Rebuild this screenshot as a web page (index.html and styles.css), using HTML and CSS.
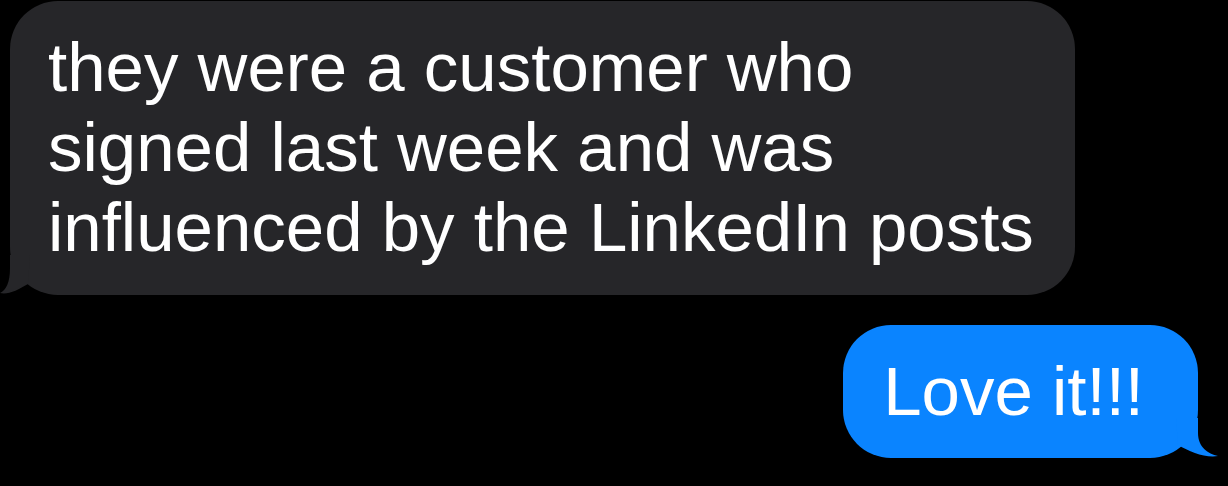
FILE: index.html
```html
<!DOCTYPE html>
<html>
<head>
<meta charset="utf-8">
<link rel="stylesheet" href="styles.css">
</head>
<body>
<div class="thread">
  <div class="bubble them">
    they were a customer who<br>signed last week and was<br>influenced by the LinkedIn posts
    <svg class="tail tail-them" width="50" height="40" viewBox="0 0 50 40"><path d="M10 0 L10 13 C10 28 6 35 0 38 C8 40 18 35 28 29 L30 0 Z"/></svg>
  </div>
  <div class="bubble me">
    Love it!!!
    <svg class="tail tail-me" width="50" height="40" viewBox="0 0 50 40"><path d="M30 0 L30 15 C30 29 40 36 50 38 C37 40 22 34 10 27 L8 0 Z"/></svg>
  </div>
</div>
</body>
</html>
```

FILE: styles.css
```css
html, body {
  margin: 0;
  padding: 0;
  background: #000;
}
body {
  width: 1228px;
  height: 486px;
  overflow: hidden;
}
.thread {
  display: flex;
  flex-direction: column;
  gap: 30px;
  padding-top: 1px;
}
.bubble {
  position: relative;
  width: max-content;
  font-family: "Liberation Sans", Arial, sans-serif;
  font-size: 69px;
  line-height: 80px;
  color: #fff;
  border-radius: 48px;
}
.them {
  background: #262629;
  margin-left: 10px;
  padding: 27px 41px 27px 38px;
}
.me {
  background: #0a84ff;
  align-self: flex-end;
  margin-right: 30px;
  padding: 27px 54px 26px 40px;
}
.tail {
  position: absolute;
  bottom: 0;
  display: block;
}
.tail-them {
  left: -10px;
  fill: #262629;
}
.tail-me {
  right: -20px;
  fill: #0a84ff;
}
```
